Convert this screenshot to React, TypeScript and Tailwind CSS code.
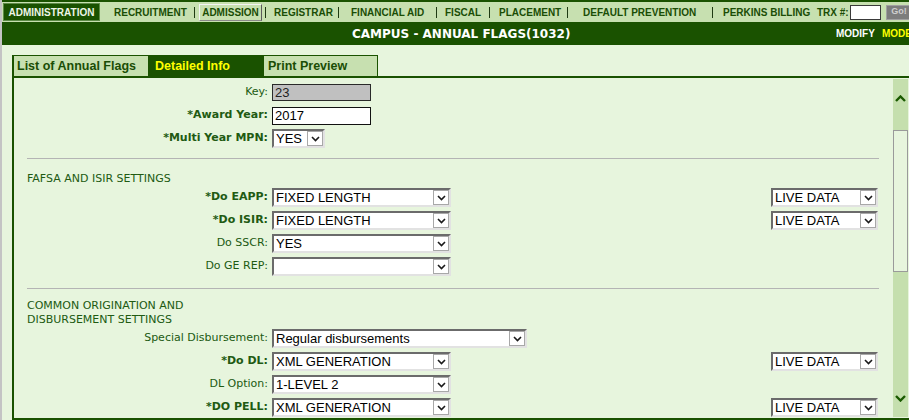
import React from "react";

const DARK = "bg-[#1a5200]";

const Chevron = () => (
  <svg width="9" height="6" viewBox="0 0 9 6">
    <path d="M1 1L4.5 4.5L8 1" fill="none" stroke="#1a1a1a" strokeWidth="1.6" />
  </svg>
);

function Select({ value, className }: { value: string; className: string }) {
  return (
    <div
      className={
        "flex h-[19px] shrink-0 border-2 border-t-[#6b6b6b] border-l-[#6b6b6b] border-r-[#e2e2e2] border-b-[#e2e2e2] bg-white " +
        className
      }
    >
      <span className="flex-1 overflow-hidden whitespace-nowrap pl-[2px] font-['Liberation_Sans',Arial,sans-serif] text-[13px] leading-[15px] text-black">
        {value}
      </span>
      <span className="flex h-[15px] w-[16px] shrink-0 items-center justify-center border border-[#a8a8a8] bg-white">
        <Chevron />
      </span>
    </div>
  );
}

function Row({
  label,
  req,
  children,
  right,
}: {
  label: string;
  req?: boolean;
  children: React.ReactNode;
  right?: React.ReactNode;
}) {
  return (
    <div className="flex h-[23px] shrink-0 items-center">
      <div
        className={
          "w-[254px] shrink-0 whitespace-nowrap text-right font-['DejaVu_Sans',Verdana,sans-serif] text-[11px] text-[#215a12] " +
          (req ? "font-bold" : "font-normal")
        }
      >
        {label}
      </div>
      <div className="ml-[4px] flex">{children}</div>
      {right ? <div className="ml-auto mr-[15px] flex">{right}</div> : null}
    </div>
  );
}

const Sep = () => <span className="h-[11px] w-px shrink-0 bg-[#1f3a12]" />;

export default function App() {
  const navText =
    "shrink-0 whitespace-nowrap font-['Liberation_Sans',Arial,sans-serif] text-[10px] font-bold text-[#1a4d05]";
  return (
    <div className="flex h-[420px] w-[909px] overflow-hidden bg-[#e7f5dd]">
      <div className="w-[2px] shrink-0 bg-[#c4c4c4]" />
      <div className="flex min-w-0 flex-1 flex-col">
        {/* Top nav */}
        <div className="flex h-[22px] shrink-0 items-center border-t-2 border-[#1a5200] bg-[#c7e0b0]">
          <div className="ml-px flex h-[18px] w-[97px] shrink-0 items-center justify-center border border-[#5e8c48] bg-[#1a5200] font-['Liberation_Sans',Arial,sans-serif] text-[10px] font-bold text-[#eef5e8]">
            ADMINISTRATION
          </div>
          <span className={"ml-[14px] w-[80px] " + navText}>RECRUITMENT</span>
          <Sep />
          <div className="ml-[4px] flex h-[17px] w-[63px] shrink-0 items-center justify-center border border-t-[#f4f4f4] border-l-[#f4f4f4] border-r-[#5a5a5a] border-b-[#8a8a8a] font-['Liberation_Sans',Arial,sans-serif] text-[10px] font-bold text-[#1a4d05]">
            ADMISSION
          </div>
          <span className="ml-[3px] flex">
            <Sep />
          </span>
          <span className={"ml-[8px] w-[64px] " + navText}>REGISTRAR</span>
          <Sep />
          <span className={"ml-[12px] w-[85px] " + navText}>FINANCIAL AID</span>
          <Sep />
          <span className={"ml-[8px] w-[44px] " + navText}>FISCAL</span>
          <Sep />
          <span className={"ml-[9px] w-[68px] " + navText}>PLACEMENT</span>
          <Sep />
          <span className={"ml-[15px] w-[129px] " + navText}>DEFAULT PREVENTION</span>
          <Sep />
          <span className={"ml-[10px] w-[94px] " + navText}>PERKINS BILLING</span>
          <span className={"w-[33px] " + navText}>TRX #:</span>
          <div className="h-[15px] w-[31px] shrink-0 border border-[#3a3a3a] bg-white" />
          <div className="ml-[5px] flex h-[15px] w-[26px] shrink-0 items-center justify-center border border-[#a0a0a0] bg-[#7d7d7d] font-['Liberation_Sans',Arial,sans-serif] text-[9px] font-bold text-[#cfcfcf]">
            Go!
          </div>
        </div>

        {/* Title bar */}
        <div className={"flex h-[23px] shrink-0 items-center " + DARK}>
          <span className="ml-[350px] shrink-0 whitespace-nowrap font-['DejaVu_Sans',Verdana,sans-serif] text-[12px] font-bold text-white">
            CAMPUS - ANNUAL FLAGS(1032)
          </span>
          <div className="flex-1" />
          <div className="flex w-[73px] shrink-0 overflow-hidden whitespace-nowrap font-['Liberation_Sans',Arial,sans-serif] text-[10px] font-bold">
            <span className="w-[46px] shrink-0 text-white">MODIFY</span>
            <span className="shrink-0 text-[#ffff00]">MODE</span>
          </div>
        </div>

        {/* Tabs + panel */}
        <div className="ml-[10px] mt-[10px] flex flex-col">
          <div className="flex h-[23px] shrink-0">
            <div className="flex w-[137px] shrink-0 items-center border border-b-2 border-l-2 border-[#1a5200] bg-[#c7e0b0] pl-[3px] font-['Liberation_Sans',Arial,sans-serif] text-[12.5px] font-bold text-[#1a4d05]">
              List of Annual Flags
            </div>
            <div className="flex w-[114px] shrink-0 items-center border border-b-2 border-[#1a5200] bg-[#1a5200] pl-[5px] font-['Liberation_Sans',Arial,sans-serif] text-[12.5px] font-bold text-[#ffff00]">
              Detailed Info
            </div>
            <div className="flex w-[115px] shrink-0 items-center border border-b-2 border-[#1a5200] bg-[#c7e0b0] pl-[4px] font-['Liberation_Sans',Arial,sans-serif] text-[12.5px] font-bold text-[#1a4d05]">
              Print Preview
            </div>
            <div className="flex-1 border-b-2 border-[#1a5200]" />
          </div>

          <div className="flex h-[342px] shrink-0 border-b-2 border-l-2 border-[#1a5200]">
            <div className="flex min-w-0 flex-1 flex-col overflow-hidden pt-[3px]">
              <Row label="Key:">
                <div className="flex h-[17px] w-[99px] items-center border border-[#2a2a2a] bg-[#c0c0c0] pl-[2px] font-['Liberation_Sans',Arial,sans-serif] text-[13px] text-[#222]">
                  23
                </div>
              </Row>
              <Row label="*Award Year:" req>
                <div className="flex h-[18px] w-[99px] items-center border border-[#111] bg-white pl-[2px] font-['Liberation_Sans',Arial,sans-serif] text-[13px] text-black">
                  2017
                </div>
              </Row>
              <Row label="*Multi Year MPN:" req>
                <Select value="YES" className="w-[53px]" />
              </Row>

              <div className="ml-[13px] mr-[14px] mt-[8px] h-px shrink-0 bg-[#b4b4b4]" />
              <div className="ml-[13px] mt-[13px] shrink-0 font-['DejaVu_Sans',Verdana,sans-serif] text-[11px] leading-[14px] text-[#215a12]">
                FAFSA AND ISIR SETTINGS
              </div>
              <Row label="*Do EAPP:" req right={<Select value="LIVE DATA" className="w-[107px]" />}>
                <Select value="FIXED LENGTH" className="w-[179px]" />
              </Row>
              <Row label="*Do ISIR:" req right={<Select value="LIVE DATA" className="w-[107px]" />}>
                <Select value="FIXED LENGTH" className="w-[179px]" />
              </Row>
              <Row label="Do SSCR:">
                <Select value="YES" className="w-[179px]" />
              </Row>
              <Row label="Do GE REP:">
                <Select value="" className="w-[179px]" />
              </Row>

              <div className="ml-[13px] mr-[14px] mt-[10px] h-px shrink-0 bg-[#b4b4b4]" />
              <div className="ml-[13px] mt-[10px] shrink-0 font-['DejaVu_Sans',Verdana,sans-serif] text-[11px] leading-[14px] text-[#215a12]">
                COMMON ORIGINATION AND
                <br />
                DISBURSEMENT SETTINGS
              </div>
              <Row label="Special Disbursement:">
                <Select value="Regular disbursements" className="w-[255px]" />
              </Row>
              <Row label="*Do DL:" req right={<Select value="LIVE DATA" className="w-[107px]" />}>
                <Select value="XML GENERATION" className="w-[179px]" />
              </Row>
              <Row label="DL Option:">
                <Select value="1-LEVEL 2" className="w-[179px]" />
              </Row>
              <Row label="*DO PELL:" req right={<Select value="LIVE DATA" className="w-[107px]" />}>
                <Select value="XML GENERATION" className="w-[179px]" />
              </Row>
            </div>

            {/* Scrollbar */}
            <div className="mb-px mr-px mt-px flex w-[15px] shrink-0 flex-col bg-[#c5dfae]">
              <div className="flex h-[51px] shrink-0 justify-center pt-[16px]">
                <svg width="11" height="7" viewBox="0 0 11 7">
                  <path d="M1 6L5.5 1.5L10 6" fill="none" stroke="#1a5a00" strokeWidth="2.4" />
                </svg>
              </div>
              <div className="h-[142px] shrink-0 border border-[#9a9a9a] bg-[#e7f5dd]" />
              <div className="flex flex-1 items-end justify-center pb-[15px]">
                <svg width="11" height="7" viewBox="0 0 11 7">
                  <path d="M1 1L5.5 5.5L10 1" fill="none" stroke="#1a5a00" strokeWidth="2.4" />
                </svg>
              </div>
            </div>
          </div>
        </div>
      </div>
    </div>
  );
}
